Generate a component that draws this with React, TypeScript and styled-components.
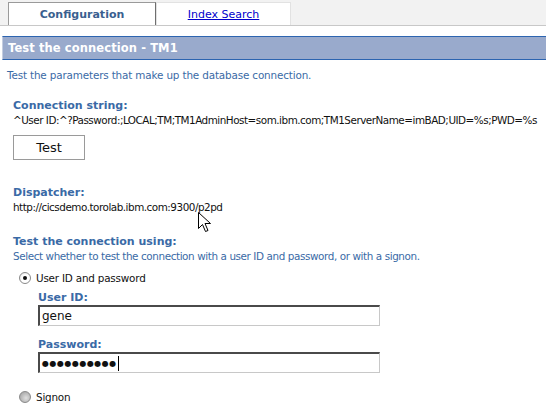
import React from "react";
import styled, { createGlobalStyle } from "styled-components";

const Global = createGlobalStyle`
  html, body { margin: 0; padding: 0; background: #ffffff; }
  body { font-family: "DejaVu Sans", "Liberation Sans", sans-serif; font-size: 11px; }
`;

const Page = styled.div`
  position: relative;
  width: 546px;
  height: 407px;
  overflow: hidden;
  background: #fff;
`;

const TabBar = styled.div`
  display: flex;
  align-items: flex-end;
  height: 25px;
  padding-left: 8px;
  background: #f2f2f2;
  border-bottom: 1px solid #c8c8c8;
`;

const Tab = styled.div<{ $active?: boolean }>`
  box-sizing: border-box;
  height: 23px;
  width: ${(p) => (p.$active ? "148px" : "135px")};
  display: flex;
  align-items: center;
  justify-content: center;
  background: #fff;
  border: 1px solid ${(p) => (p.$active ? "#9a9a9a" : "#e2e2e2")};
  border-bottom: none;
  ${(p) => (p.$active ? "border-right-color: #6f6f6f;" : "")}
  font-family: "DejaVu Sans", sans-serif;
  font-size: 11px;
  font-weight: ${(p) => (p.$active ? "bold" : "normal")};
  color: ${(p) => (p.$active ? "#3a5f8f" : "#0000cc")};
  text-decoration: ${(p) => (p.$active ? "none" : "underline")};
`;

const Header = styled.div`
  margin: 10px 0 0 2px;
  height: 22px;
  display: flex;
  align-items: center;
  padding-left: 5px;
  background: #99aacc;
  border-top: 1px solid #2c64b0;
  border-bottom: 1px solid #2c64b0;
  border-left: 1px solid #c4cde0;
  color: #fff;
  font-weight: bold;
  font-size: 11.5px;
  letter-spacing: 0.1px;
`;

const Content = styled.div`
  display: flex;
  flex-direction: column;
`;

const Intro = styled.div`
  margin: 9px 0 0 7px;
  color: #3a6aa6;
  font-size: 10.4px;
  letter-spacing: -0.15px;
`;

const Section = styled.div<{ $top: number; $left?: number }>`
  margin: ${(p) => p.$top}px 0 0 ${(p) => p.$left ?? 13}px;
  display: flex;
  flex-direction: column;
`;

const Label = styled.div`
  color: #3a6aa6;
  font-weight: bold;
  font-size: 11px;
  line-height: 14px;
`;

const Value = styled.div<{ $blue?: boolean }>`
  color: ${(p) => (p.$blue ? "#3a6aa6" : "#111")};
  font-size: 10.4px;
  line-height: 14px;
  white-space: nowrap;
  letter-spacing: ${(p) => (p.$blue ? "-0.4px" : "-0.48px")};
`;

const Button = styled.div`
  box-sizing: border-box;
  margin-top: 8px;
  width: 72px;
  height: 25px;
  border: 1px solid #9a9a9a;
  display: flex;
  align-items: center;
  justify-content: center;
  font-size: 13px;
  color: #111;
`;

const RadioRow = styled.div<{ $top: number }>`
  margin: ${(p) => p.$top}px 0 0 19px;
  display: flex;
  align-items: center;
  gap: 5px;
  font-size: 10.4px;
  letter-spacing: -0.2px;
  color: #111;
  height: 14px;
`;

const Radio = styled.span<{ $checked?: boolean }>`
  box-sizing: border-box;
  width: 12px;
  height: 12px;
  border-radius: 50%;
  border: 1px solid #8a8a8a;
  background: ${(p) =>
    p.$checked
      ? "radial-gradient(circle at 60% 60%, #ffffff 50%, #d8d8d8)"
      : "radial-gradient(circle at 60% 60%, #e0e0e0, #9a9a9a)"};
  display: flex;
  align-items: center;
  justify-content: center;
  &::after {
    content: "";
    width: 4px;
    height: 4px;
    border-radius: 50%;
    background: ${(p) => (p.$checked ? "#111" : "transparent")};
  }
`;

const Field = styled.div`
  box-sizing: border-box;
  width: 342px;
  height: 21px;
  border-top: 2px solid #4a4a4a;
  border-left: 2px solid #4a4a4a;
  border-right: 1px solid #c8c8c8;
  border-bottom: 1px solid #c8c8c8;
  display: flex;
  align-items: center;
  padding-left: 2px;
  font-size: 12px;
  color: #111;
`;

const Dots = styled.span`
  font-size: 8px;
  letter-spacing: 0.5px;
`;

const Caret = styled.span`
  display: inline-block;
  width: 1px;
  height: 15px;
  background: #000;
  margin-left: 1px;
`;

const Cursor = styled.svg`
  position: absolute;
  left: 198px;
  top: 212px;
`;

export default function App() {
  return (
    <Page>
      <Global />
      <TabBar>
        <Tab $active>Configuration</Tab>
        <Tab>Index Search</Tab>
      </TabBar>
      <Header>Test the connection - TM1</Header>
      <Content>
        <Intro>Test the parameters that make up the database connection.</Intro>
        <Section $top={18}>
          <Label>Connection string:</Label>
          <Value>^User ID:^?Password:;LOCAL;TM;TM1AdminHost=som.ibm.com;TM1ServerName=imBAD;UID=%s;PWD=%s</Value>
          <Button>Test</Button>
        </Section>
        <Section $top={26}>
          <Label>Dispatcher:</Label>
          <Value>http://cicsdemo.torolab.ibm.com:9300/p2pd</Value>
        </Section>
        <Section $top={21}>
          <Label>Test the connection using:</Label>
          <Value $blue>Select whether to test the connection with a user ID and password, or with a signon.</Value>
        </Section>
        <RadioRow $top={8}>
          <Radio $checked />
          User ID and password
        </RadioRow>
        <Section $top={6} $left={38}>
          <Label>User ID:</Label>
          <Field>gene</Field>
        </Section>
        <Section $top={12} $left={38}>
          <Label>Password:</Label>
          <Field>
            <Dots>●●●●●●●●●●</Dots>
            <Caret />
          </Field>
        </Section>
        <RadioRow $top={17}>
          <Radio />
          Signon
        </RadioRow>
      </Content>
      <Cursor width="13" height="21" viewBox="0 0 13 21">
        <path d="M0.5 0.5 L0.5 16.5 L4.5 12.5 L7.5 19.5 L10 18.5 L7 11.5 L12.5 11.5 Z" fill="#fff" stroke="#000" strokeWidth="1" />
      </Cursor>
    </Page>
  );
}
